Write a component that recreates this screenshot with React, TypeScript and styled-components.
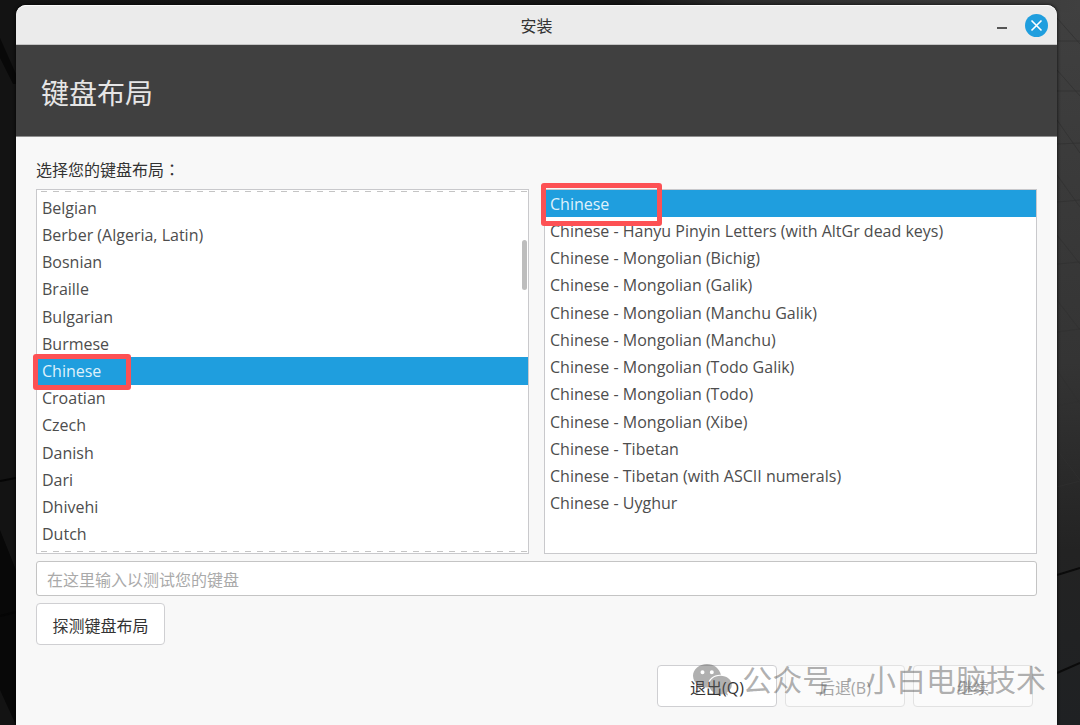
import React, { useState } from "react";
import styled, { createGlobalStyle, css } from "styled-components";

const GlobalStyle = createGlobalStyle`
  *, *::before, *::after { box-sizing: border-box; }
  body {
    margin: 0;
    background: #161616;
    font-family: "Noto Sans", "Noto Sans CJK SC", sans-serif;
    font-size: 16px;
    color: #4d4d4d;
  }
  button, input { font: inherit; color: inherit; }
`;

const Desktop = styled.div`
  position: relative;
  display: flex;
  min-height: 100vh;
  padding: 5px 23px 0 16px;
  overflow: hidden;
  background: linear-gradient(180deg, #404040 0%, #343434 50%, #232323 76%, #1f2123 100%);
`;

const Wallpaper = styled.svg`
  position: absolute;
  inset: 0;
  width: 100%;
  height: 100%;
`;

const Window = styled.main`
  position: relative;
  flex: 1;
  min-width: 0;
  display: flex;
  flex-direction: column;
  border-radius: 10px 10px 0 0;
  background: #f8f8f8;
  box-shadow: 0 0 3px 1px rgba(0, 0, 0, 0.5);
`;

const TitleBar = styled.header`
  display: grid;
  grid-template-columns: 1fr auto 1fr;
  align-items: center;
  height: 40px;
  padding: 0 9px;
  border-radius: 10px 10px 0 0;
  border-top: 1px solid #fafafa;
  border-bottom: 1px solid #c4c4c4;
  background: #ebebeb;
`;

const WindowTitle = styled.span`
  grid-column: 2;
  padding-top: 2px;
  line-height: 24px;
  color: #333;
`;

const WindowControls = styled.div`
  display: flex;
  justify-content: flex-end;
  align-items: center;
  gap: 12px;
`;

const ControlButton = styled.button<{ $close?: boolean }>`
  display: grid;
  place-items: center;
  width: 23px;
  height: 23px;
  padding: 0;
  border: 0;
  border-radius: 50%;
  background: ${(p) => (p.$close ? "#1f9ede" : "transparent")};
  color: ${(p) => (p.$close ? "#fff" : "#555")};
`;

const Banner = styled.div`
  display: flex;
  align-items: center;
  height: 92px;
  padding: 4px 25px 0;
  border-bottom: 1px solid #8f8f8f;
  background: #404040;
`;

const BannerTitle = styled.h1`
  margin: 0;
  font-size: 28px;
  font-weight: 400;
  line-height: 40px;
  color: #e6e6e6;
`;

const Content = styled.div`
  display: flex;
  flex-direction: column;
  align-items: stretch;
  gap: 7px;
  padding: 21px 20px 0;
`;

const Caption = styled.p`
  height: 24px;
  margin: 0;
  line-height: 24px;
  color: #333;
`;

const CenteredColon = styled.span`
  font-family: "Noto Sans CJK TC", sans-serif;
  line-height: 16px;
`;

const Lists = styled.div`
  display: grid;
  grid-template-columns: 1fr 1fr;
  gap: 15px;
`;

const ListFrame = styled.div<{ $scrolled?: boolean }>`
  position: relative;
  height: 365px;
  border: 1px solid #c9c9cc;
  background: #fff;
  ${(p) =>
    p.$scrolled &&
    css`
      padding: 4px 0;
    `}
`;

const OverflowEdge = styled.span<{ $side: "top" | "bottom" }>`
  position: absolute;
  left: 4px;
  right: 0;
  ${(p) => p.$side}: 1px;
  height: 1px;
  background: repeating-linear-gradient(90deg, #c4c4c4 0 6px, transparent 6px 12px);
`;

const ScrollThumb = styled.span`
  position: absolute;
  top: 50px;
  right: 1px;
  width: 5px;
  height: 50px;
  border-radius: 3px;
  background: #bdbdbd;
`;

const ListBox = styled.div<{ $height: number }>`
  display: grid;
  grid-auto-rows: 1fr;
  height: ${(p) => p.$height}px;
`;

const Option = styled.button<{ $selected: boolean }>`
  position: relative;
  display: flex;
  align-items: center;
  min-height: 0;
  padding: 0 5px;
  border: 0;
  text-align: left;
  font-family: "Open Sans", "Noto Sans", sans-serif;
  line-height: 20px;
  white-space: nowrap;
  background: ${(p) => (p.$selected ? "#1f9ede" : "transparent")};
  color: ${(p) => (p.$selected ? "#dff1fb" : "#4d4d4d")};
`;

const Marker = styled.span<{ $w: number; $h: number; $above: number }>`
  position: absolute;
  z-index: 1;
  top: -${(p) => p.$above}px;
  left: -4px;
  width: ${(p) => p.$w}px;
  height: ${(p) => p.$h}px;
  border: 5px solid #fd5154;
  border-radius: 3px;
  pointer-events: none;
`;

const TestInput = styled.input`
  width: 100%;
  height: 35px;
  padding: 2px 10px 0;
  border: 1px solid #c4c4c4;
  border-radius: 3px;
  background: #fff;
  &::placeholder {
    color: #aaa;
    opacity: 1;
  }
`;

const PushButton = styled.button<{ $width: number }>`
  width: ${(p) => p.$width}px;
  height: 42px;
  padding: 2px 0 0;
  border: 1px solid #cfcfd2;
  border-radius: 4px;
  background: #fff;
  font-family: "Open Sans", "Noto Sans CJK SC", sans-serif;
  color: #333;
  &:disabled {
    border-color: #e2e2e2;
    background: #fbfbfb;
    color: #a6a6a6;
  }
`;

const ProbeRow = styled.div`
  display: flex;
`;

const Actions = styled.footer`
  display: flex;
  justify-content: flex-end;
  gap: 8px;
  padding: 20px 24px 18px;
`;

const Watermark = styled.div`
  position: absolute;
  right: 11px;
  bottom: 23px;
  display: flex;
  align-items: center;
  gap: 9px;
  font-size: 30px;
  line-height: 44px;
  white-space: pre;
  font-family: "Noto Sans", "Noto Sans CJK SC", sans-serif;
  color: rgba(90, 90, 90, 0.48);
  pointer-events: none;
`;

const Dot = styled.span`
  padding: 0 5px;
`;

const languages = [
  "Belgian",
  "Berber (Algeria, Latin)",
  "Bosnian",
  "Braille",
  "Bulgarian",
  "Burmese",
  "Chinese",
  "Croatian",
  "Czech",
  "Danish",
  "Dari",
  "Dhivehi",
  "Dutch",
];

const variants = [
  "Chinese",
  "Chinese - Hanyu Pinyin Letters (with AltGr dead keys)",
  "Chinese - Mongolian (Bichig)",
  "Chinese - Mongolian (Galik)",
  "Chinese - Mongolian (Manchu Galik)",
  "Chinese - Mongolian (Manchu)",
  "Chinese - Mongolian (Todo Galik)",
  "Chinese - Mongolian (Todo)",
  "Chinese - Mongolian (Xibe)",
  "Chinese - Tibetan",
  "Chinese - Tibetan (with ASCII numerals)",
  "Chinese - Uyghur",
];

type LayoutListProps = {
  label: string;
  items: string[];
  height: number;
  marker: { $w: number; $h: number; $above: number };
};

function LayoutList({ label, items, height, marker }: LayoutListProps) {
  const [selected, setSelected] = useState("Chinese");
  return (
    <ListBox role="listbox" aria-label={label} $height={height}>
      {items.map((item) => (
        <Option
          key={item}
          type="button"
          role="option"
          aria-selected={item === selected}
          $selected={item === selected}
          onClick={() => setSelected(item)}
        >
          {item}
          {item === "Chinese" && <Marker {...marker} />}
        </Option>
      ))}
    </ListBox>
  );
}

function DesktopWallpaper() {
  return (
    <Wallpaper viewBox="0 0 1080 725" preserveAspectRatio="none" aria-hidden="true">
      <defs>
        <linearGradient id="top" x1="0" x2="1" y1="0" y2="0">
          <stop offset="0" stopColor="#131313" />
          <stop offset="0.58" stopColor="#161616" />
          <stop offset="0.68" stopColor="#2b2b2b" />
          <stop offset="1" stopColor="#404040" />
        </linearGradient>
      </defs>
      <path d="M0 0H1080V12H0Z" fill="url(#top)" />
      <path d="M0 0H20V725H0Z" fill="#131313" />
      <path d="M0 38L16 74V84H13L0 58ZM0 530L16 570V725L0 690Z" fill="#080808" />
      <path d="M0 481L16 478M0 616L16 612" stroke="#050505" strokeWidth="2" />
      <path
        d="M1057 41H1080M1057 91H1080M1057 144L1080 143M1057 202L1080 200M1057 264L1080 262M1057 332L1080 329M1057 406L1080 401M1057 487L1080 481M1057 18L1080 44M1057 70L1080 96M1057 120L1080 153M1057 175L1080 207M1057 235L1080 264M1057 300L1080 330M1057 370L1080 404M1057 450L1080 480"
        stroke="#303030"
        strokeOpacity="0.7"
        fill="none"
      />
      <path d="M1057 575L1080 568M1057 673L1080 663" stroke="#0b0b0b" strokeWidth="2" />
    </Wallpaper>
  );
}

export default function App() {
  return (
    <>
      <GlobalStyle />
      <Desktop>
        <DesktopWallpaper />
        <Window>
          <TitleBar>
            <WindowTitle>安装</WindowTitle>
            <WindowControls>
              <ControlButton type="button" aria-label="最小化">
                <svg width="23" height="23" viewBox="0 0 23 23">
                  <path d="M7 14H17" stroke="currentColor" strokeWidth="2" />
                </svg>
              </ControlButton>
              <ControlButton type="button" aria-label="关闭" $close>
                <svg width="23" height="23" viewBox="0 0 23 23">
                  <path d="M6.500 6.500L16.500 16.500M16.500 6.500L6.500 16.500" stroke="currentColor" strokeWidth="1.6" />
                </svg>
              </ControlButton>
            </WindowControls>
          </TitleBar>
          <Banner>
            <BannerTitle>键盘布局</BannerTitle>
          </Banner>
          <Content>
            <Caption>
              选择您的键盘布局<CenteredColon>：</CenteredColon>
            </Caption>
            <Lists>
              <ListFrame $scrolled>
                <LayoutList
                  label="键盘语言"
                  items={languages}
                  height={354}
                  marker={{ $w: 98, $h: 36, $above: 3 }}
                />
                <OverflowEdge $side="top" />
                <OverflowEdge $side="bottom" />
                <ScrollThumb />
              </ListFrame>
              <ListFrame>
                <LayoutList
                  label="键盘变体"
                  items={variants}
                  height={327}
                  marker={{ $w: 121, $h: 43, $above: 7 }}
                />
              </ListFrame>
            </Lists>
            <TestInput aria-label="测试键盘" placeholder="在这里输入以测试您的键盘" />
            <ProbeRow>
              <PushButton type="button" $width={129}>
                探测键盘布局
              </PushButton>
            </ProbeRow>
          </Content>
          <Actions>
            <PushButton type="button" $width={120}>
              退出(Q)
            </PushButton>
            <PushButton type="button" $width={120} disabled>
              后退(B)
            </PushButton>
            <PushButton type="button" $width={120} disabled>
              继续
            </PushButton>
          </Actions>
          <Watermark>
            <svg width="40" height="32" viewBox="0 0 40 32" aria-hidden="true">
              <path
                fill="currentColor"
                fillRule="evenodd"
                d="M14 0C6.300 0 0 5.200 0 11.800c0 3.700 2 7 5.200 9.200L4 25l4.700-2.300c1.700.5 3.500.8 5.300.8h1.300c-.3-.9-.4-1.800-.4-2.700 0-5.600 5.400-10.100 12.100-10.100h.9C26.600 4.600 20.900 0 14 0ZM9.500 6.200a2 2 0 1 1 0 4 2 2 0 0 1 0-4Zm9.300 0a2 2 0 1 1 0 4 2 2 0 0 1 0-4Z"
              />
              <path
                fill="currentColor"
                d="M27.500 11.800c-6.400 0-11.300 4.200-11.300 9.300s4.900 9.300 11.300 9.300c1.400 0 2.700-.2 3.900-.6L35 31.600l-1-3.200c2.900-1.700 4.800-4.400 4.800-7.300 0-5.100-4.900-9.300-11.300-9.300Z"
              />
            </svg>
            <span>
              公众号<Dot> · </Dot>小白电脑技术
            </span>
          </Watermark>
        </Window>
      </Desktop>
    </>
  );
}
